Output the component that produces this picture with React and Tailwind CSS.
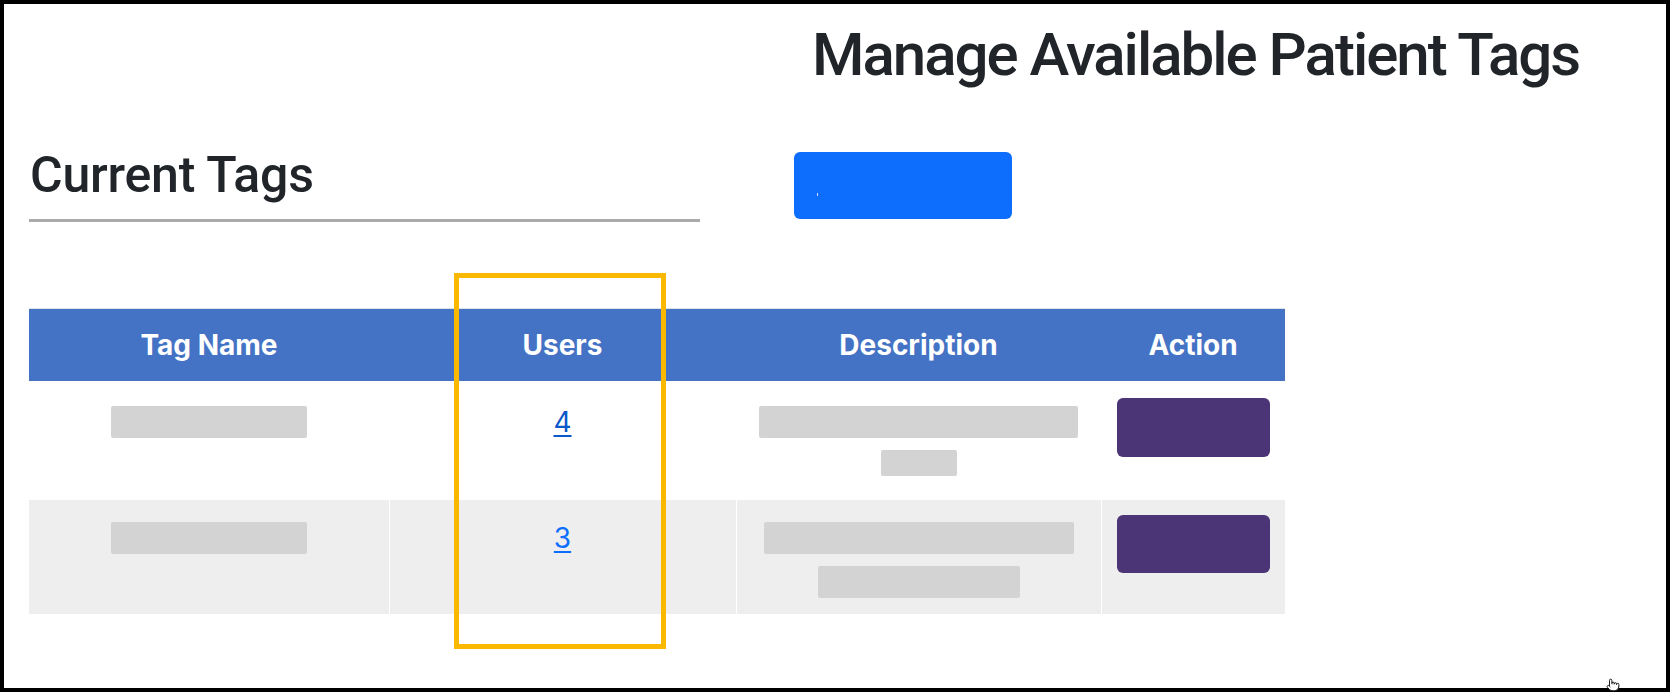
import { Pointer } from "lucide-react";

const ROWS = [
  {
    users: 4,
    linkClass: "text-[#0a58ca]",
    rowClass: "h-[119px] bg-white",
    pad: "pt-[25px]",
    btnPad: "pt-[17px]",
    btnH: "h-[59px]",
    desc: [
      "w-[319px] h-[32px]",
      "w-[76px] h-[26px]",
    ],
  },
  {
    users: 3,
    linkClass: "text-[#0d6efd]",
    rowClass: "h-[114px] bg-[#eeeeee]",
    pad: "pt-[22px]",
    btnPad: "pt-[15px]",
    btnH: "h-[58px]",
    desc: [
      "w-[310px] h-[32px]",
      "w-[202px] h-[32px]",
    ],
  },
];

function Bar({ size }) {
  return <div className={"rounded-[2px] bg-[#d3d3d3] " + size} />;
}

export default function App() {
  return (
    <div className="relative h-[692px] w-full border-4 border-black bg-white font-['Roboto',sans-serif] text-[#212529]">
      <h1 className="ml-[808px] mt-[21px] text-[60px] font-medium leading-none tracking-[-2px]">
        Manage Available Patient Tags
      </h1>

      <div className="ml-[25px] mt-[65px] flex items-start">
        <div className="w-[671px] border-b-[3px] border-[#aaaaaa] pb-[19px]">
          <h2 className="pl-[1px] text-[50px] font-medium leading-none tracking-[-0.2px]">
            Current Tags
          </h2>
        </div>
        <button
          type="button"
          className="ml-[94px] mt-[2px] flex h-[67px] w-[218px] items-start rounded-[6px] bg-[#0d6efd] pl-[23px] pt-[41px]"
        >
          <span className="h-[3px] w-px bg-white/80" />
        </button>
      </div>

      <div className="ml-[25px] mt-[86px] w-[1256px] border-t border-[#e3e3e3]">
        <table className="w-full table-fixed border-collapse">
          <colgroup>
            <col className="w-[360px]" />
            <col className="w-[347px]" />
            <col className="w-[365px]" />
            <col className="w-[184px]" />
          </colgroup>
          <thead>
            <tr className="h-[72px] bg-[#4472c4] font-['Inter',sans-serif] text-[28px] font-bold text-white">
              <th className="p-0 text-center">Tag Name</th>
              <th className="p-0 text-center">Users</th>
              <th className="p-0 text-center">Description</th>
              <th className="p-0 text-center">Action</th>
            </tr>
          </thead>
          <tbody>
            {ROWS.map((row) => (
              <tr key={row.users} className={row.rowClass}>
                <td className="p-0 align-top">
                  <div className={"flex justify-center " + row.pad}>
                    <Bar size="w-[196px] h-[32px]" />
                  </div>
                </td>
                <td className="border-l border-white p-0 align-top">
                  <div className={"flex justify-center " + row.pad}>
                    <a
                      href="#"
                      className={
                        "font-['Inter',sans-serif] text-[28px] leading-[32px] underline underline-offset-[3px] " +
                        row.linkClass
                      }
                    >
                      {row.users}
                    </a>
                  </div>
                </td>
                <td className="border-l border-white p-0 align-top">
                  <div className={"flex flex-col items-center gap-[12px] " + row.pad}>
                    {row.desc.map((d) => (
                      <Bar key={d} size={d} />
                    ))}
                  </div>
                </td>
                <td className="border-l border-white p-0 align-top">
                  <div className={"flex justify-center " + row.btnPad}>
                    <button
                      type="button"
                      className={"w-[153px] rounded-[6px] bg-[#4b3577] " + row.btnH}
                    />
                  </div>
                </td>
              </tr>
            ))}
          </tbody>
        </table>
      </div>

      {/* annotation box around the Users column */}
      <div className="pointer-events-none absolute left-[450px] top-[269px] h-[376px] w-[212px] border-[5px] border-[#fbb800]" />

      <Pointer
        className="absolute left-[1602px] top-[674px]"
        size={14}
        strokeWidth={1.5}
        color="#000"
        fill="#fff"
      />
    </div>
  );
}
